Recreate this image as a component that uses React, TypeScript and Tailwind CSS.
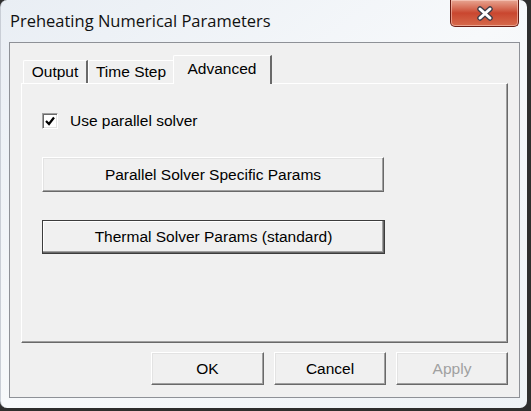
import React from "react";

const font = { fontFamily: '"Liberation Sans", Arial, sans-serif' };

const btn3d =
  "flex items-center justify-center bg-[#f0f0f0] border border-t-white border-l-white border-r-[#696969] border-b-[#696969] shadow-[inset_-1px_-1px_0_#a0a0a0,inset_1px_1px_0_#e3e3e3]";

const CloseButton = () => (
  <div className="w-[69px] h-[27px] rounded-b-[5px] border border-t-0 border-[#6b1d14] bg-gradient-to-b from-[#e7a592] via-[#c9462f] to-[#d66a4c] flex items-center justify-center shadow-[inset_0_0_0_1px_rgba(255,220,210,0.5)]">
    <svg width="18" height="15" viewBox="0 0 18 15">
      <path d="M4 3 L14 12 M14 3 L4 12" stroke="#3d3d48" strokeWidth="5.5" strokeLinecap="round" />
      <path d="M4 3 L14 12 M14 3 L4 12" stroke="#ffffff" strokeWidth="3" strokeLinecap="round" />
    </svg>
  </div>
);

const Checkbox = () => (
  <div className="w-[16px] h-[16px] bg-white border border-t-[#a0a0a0] border-l-[#a0a0a0] border-r-white border-b-white shadow-[inset_1px_1px_0_#696969,inset_-1px_-1px_0_#e3e3e3] flex items-center justify-center">
    <svg width="12" height="12" viewBox="0 0 12 12">
      <path d="M2 6 L5 9 L10 2.5" stroke="#000" strokeWidth="2.2" fill="none" />
    </svg>
  </div>
);

const Tab = ({ label, selected, className }: any) => (
  <div
    className={`flex items-center justify-center bg-[#f0f0f0] border-t border-l border-t-white border-l-white border-r-2 border-r-[#696969] rounded-tl-[2px] ${
      selected ? "h-[29px] -mb-px relative z-10 -ml-[2px] pb-[3px]" : "h-[23px]"
    } ${className}`}
  >
    {label}
  </div>
);

export default function App() {
  return (
    <div className="w-[531px] h-[411px] bg-[#2e2e2e] text-[15.5px] text-black" style={font}>
      <div className="w-[527px] h-[408px] rounded-[7px] bg-gradient-to-br from-[#e9eef4] via-[#f7f9fb] to-[#eef2f6] border-l border-[#c9ced6] flex flex-col">
        {/* Title bar */}
        <div className="h-[42px] flex items-start justify-between pl-[9px] pr-[8px]">
          <div
            className="pt-[9px] text-[16.5px] text-[#111]"
            style={{ fontFamily: '"Open Sans", "Noto Sans", sans-serif' }}
          >
            Preheating Numerical Parameters
          </div>
          <CloseButton />
        </div>

        {/* Client area */}
        <div className="ml-[8px] w-[511px] h-[356px] border border-[#8e9197] bg-[#f0f0f0] flex flex-col px-[11px] pt-[12px]">
          {/* Tabs */}
          <div className="h-[28px] flex items-end pl-[2px]">
            <Tab label="Output" className="w-[65px]" />
            <Tab label="Time Step" className="w-[87px]" />
            <Tab label="Advanced" selected className="w-[99px]" />
          </div>

          {/* Tab panel */}
          <div className="w-[487px] h-[260px] border border-t-white border-l-white border-r-[#696969] border-b-[#696969] shadow-[inset_-1px_-1px_0_#a0a0a0] flex flex-col pl-[20px] pt-[29px]">
            <div className="flex items-center h-[16px]">
              <Checkbox />
              <span className="ml-[12px]">Use parallel solver</span>
            </div>
            <div className={`${btn3d} mt-[28px] w-[342px] h-[35px]`}>
              Parallel Solver Specific Params
            </div>
            <div className="mt-[28px] w-[343px] h-[34px] border border-[#3c3c3c] bg-[#f0f0f0] flex items-center justify-center shadow-[inset_-1px_-1px_0_#696969,inset_-2px_-2px_0_#a0a0a0,inset_1px_1px_0_#ffffff]">
              Thermal Solver Params (standard)
            </div>
          </div>

          {/* Dialog buttons */}
          <div className="mt-[9px] flex justify-end gap-[10px]">
            <div className={`${btn3d} w-[113px] h-[33px]`}>OK</div>
            <div className={`${btn3d} w-[112px] h-[33px]`}>Cancel</div>
            <div className={`${btn3d} w-[112px] h-[33px] text-[#a0a0a0]`}>Apply</div>
          </div>
        </div>
      </div>
    </div>
  );
}
